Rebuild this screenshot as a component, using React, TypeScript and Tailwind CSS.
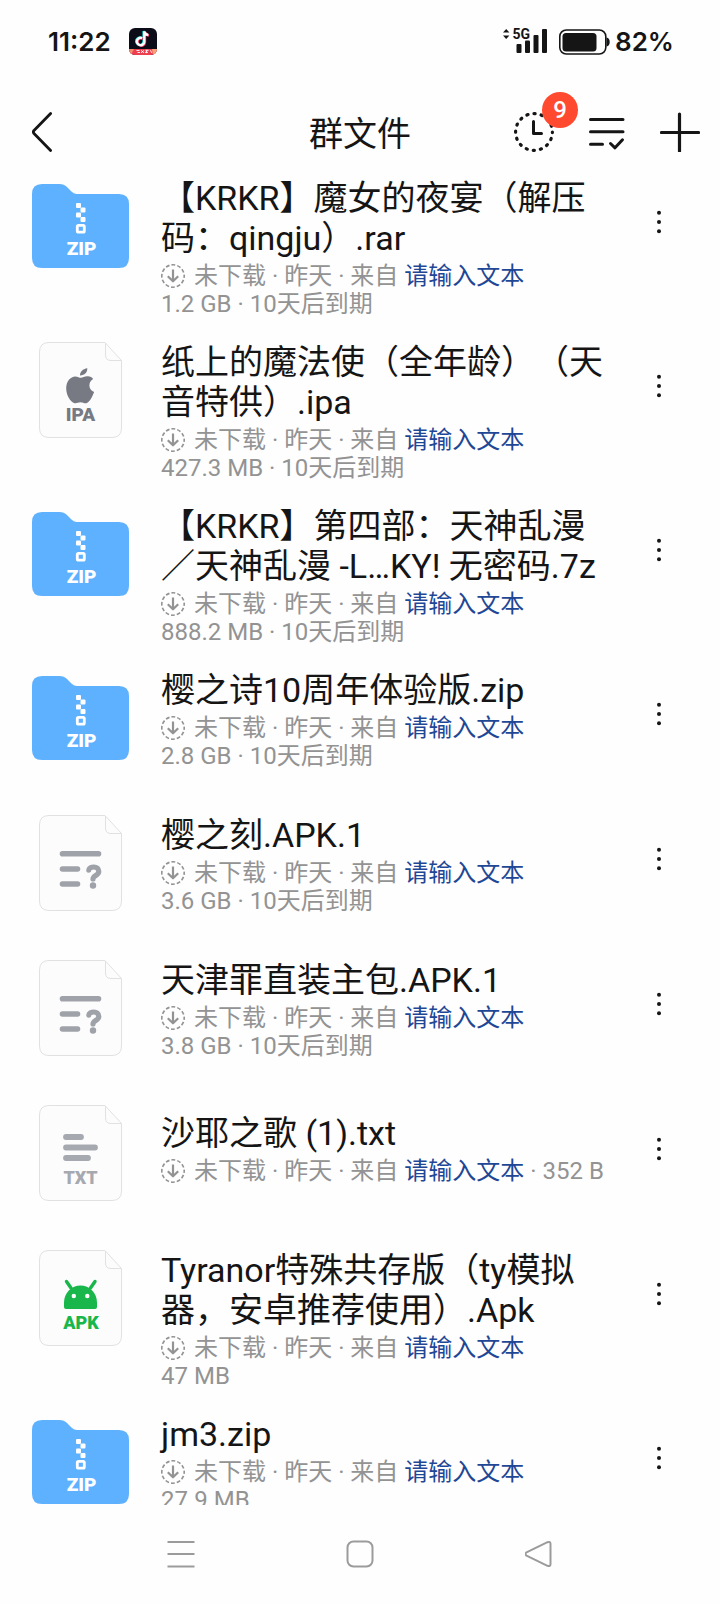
import type { ReactNode } from "react";

type FileKind = "zip" | "ipa" | "unknown" | "txt" | "apk";

interface GroupFile {
  name: string;
  kind: FileKind;
  sender: string;
  inlineSize?: string;
  detail?: string;
}

const SENDER = "请输入文本";

const files: GroupFile[] = [
  { name: "【KRKR】魔女的夜宴（解压码：qingju）.rar", kind: "zip", sender: SENDER, detail: "1.2 GB · 10天后到期" },
  { name: "纸上的魔法使（全年龄）（天音特供）.ipa", kind: "ipa", sender: SENDER, detail: "427.3 MB · 10天后到期" },
  { name: "【KRKR】第四部：天神乱漫／天神乱漫 -L…KY! 无密码.7z", kind: "zip", sender: SENDER, detail: "888.2 MB · 10天后到期" },
  { name: "樱之诗10周年体验版.zip", kind: "zip", sender: SENDER, detail: "2.8 GB · 10天后到期" },
  { name: "樱之刻.APK.1", kind: "unknown", sender: SENDER, detail: "3.6 GB · 10天后到期" },
  { name: "天津罪直装主包.APK.1", kind: "unknown", sender: SENDER, detail: "3.8 GB · 10天后到期" },
  { name: "沙耶之歌 (1).txt", kind: "txt", sender: SENDER, inlineSize: "352 B" },
  { name: "Tyranor特殊共存版（ty模拟器，安卓推荐使用）.Apk", kind: "apk", sender: SENDER, detail: "47 MB" },
  { name: "jm3.zip", kind: "zip", sender: SENDER, detail: "27.9 MB" },
];

// Status bar icons
const TikTokIcon = () => (
  <svg className="w-7 h-7" viewBox="0 0 28 28" aria-hidden="true">
    <defs>
      <clipPath id="app-clip">
        <rect width="28" height="27" rx="6" />
      </clipPath>
    </defs>
    <g clipPath="url(#app-clip)">
      <rect width="28" height="28" fill="#0b0c17" />
      <g fill="none" strokeWidth="2.4">
        <path d="M13.2 10.2a3.7 3.7 0 1 0 2.1 3.6V3.4c.4 2 1.6 3.2 4 3.6" stroke="#25e5e0" transform="translate(-.7 -.4)" />
        <path d="M13.2 10.2a3.7 3.7 0 1 0 2.1 3.6V3.4c.4 2 1.6 3.2 4 3.6" stroke="#f43360" transform="translate(.7 .5)" />
        <path d="M13.2 10.2a3.7 3.7 0 1 0 2.1 3.6V3.4c.4 2 1.6 3.2 4 3.6" stroke="#fff" />
      </g>
      <path d="M0 21h28v7H0z" fill="#ee3f50" />
      <path d="M0 21h5l-3 6H0z" fill="#f58a6c" />
      <path d="M23 21h5v6h-4z" fill="#f7a07a" />
      <path d="M7.500 22.500h3m-2 2h2.500m1-2.200l3 2.600m0-2.600l-3 2.600m4.500-2.600h3m-3.500 2h3m-1.500-2v2.800m4-2.800l1.200 2.500" stroke="#fff" strokeWidth=".9" fill="none" />
    </g>
  </svg>
);

const SignalIcon = () => (
  <svg className="w-11 h-7 overflow-visible" viewBox="0 0 44 28" fill="#151515" aria-hidden="true">
    <path d="M3.200 1L6.400 4.600H0zM3.200 11L6.400 7.400H0z" />
    <text x="9.500" y="11" fontSize="14" fontWeight="700" fontFamily="Roboto, sans-serif">5G</text>
    <rect x="13.500" y="16" width="5" height="9" rx="1" />
    <rect x="22" y="12.500" width="5" height="12.500" rx="1" />
    <rect x="30.500" y="7" width="5" height="18" rx="1" />
    <rect x="39" y="1" width="5" height="24" rx="1" />
  </svg>
);

const BatteryIcon = () => (
  <svg className="w-[51px] h-7" viewBox="0 0 51 28" aria-hidden="true">
    <rect x=".8" y="2" width="46" height="24" rx="6.500" fill="none" stroke="#151515" strokeWidth="1.600" />
    <rect x="3.500" y="5" width="34" height="18.500" rx="3.500" fill="#151515" />
    <path d="M47.500 9.500c2.200.4 3.200 1.800 3.200 4.500s-1 4.100-3.200 4.500z" fill="#151515" />
  </svg>
);

// Header icons
const BackIcon = () => (
  <svg className="w-5 h-10" fill="none" stroke="#151515" viewBox="0 0 20 40">
    <path strokeLinecap="round" strokeLinejoin="round" strokeWidth={2.8} d="M18.600 1.600L2 18.500q-1.300 1.500 0 3L18.600 38.400" />
  </svg>
);

const ClockIcon = () => (
  <svg className="w-10 h-10" fill="none" stroke="#151515" strokeLinecap="round" viewBox="0 0 40 40">
    <circle cx="20" cy="20" r="18.400" strokeWidth={3.2} strokeDasharray="1.200 6.026" strokeDashoffset=".6" />
    <path strokeWidth={3} strokeLinejoin="round" d="M19.500 9.500V21.500H27.500" />
  </svg>
);

const ListCheckIcon = () => (
  <svg className="w-9 h-10" fill="none" stroke="#151515" strokeLinecap="round" strokeLinejoin="round" strokeWidth={3} viewBox="0 0 36 40">
    <path d="M1.500 7.500H34M1.500 19.800H34M1.500 32.300H13.500M21.500 31.500L26 35.800L33.500 27.800" />
  </svg>
);

const PlusIcon = () => (
  <svg className="w-10 h-10" fill="none" stroke="#151515" strokeLinecap="round" strokeWidth={3.2} viewBox="0 0 40 40">
    <path d="M19.500 2v37M1.500 20.500H38.500" />
  </svg>
);

const DownloadIcon = () => (
  <svg className="w-6 h-6 shrink-0" fill="none" stroke="#939393" viewBox="0 0 24 24" aria-hidden="true">
    <circle cx="12" cy="12" r="11.200" strokeWidth={1.6} strokeDasharray="3.800 2.065" strokeDashoffset="1.900" />
    <path strokeLinejoin="round" strokeWidth={2.2} d="M12 5.500V17M6.800 12.200L12 17.300L17.200 12.200" />
  </svg>
);

const MoreIcon = () => (
  <svg className="w-1 h-6" fill="#151515" viewBox="0 0 4 24">
    <circle cx="2" cy="2.700" r="2" />
    <circle cx="2" cy="12" r="2" />
    <circle cx="2" cy="21.300" r="2" />
  </svg>
);

// File type icons
const ZipIcon = () => (
  <svg className="w-[97px] h-[84px]" viewBox="0 0 97 84" aria-hidden="true">
    <path d="M0 10Q0 0 10 0H27.500Q32 0 35 3L40 8Q42.300 10 45 10H87Q97 10 97 20V74Q97 84 87 84H10Q0 84 0 74Z" fill="#5eb1ff" />
    <g fill="#fff">
      <rect x="44" y="19" width="5" height="5" rx="1" />
      <rect x="48.500" y="23.500" width="5" height="5" rx="1" />
      <rect x="44" y="28.500" width="5" height="5" rx="1" />
      <rect x="48.500" y="33" width="5" height="5" rx="1" />
    </g>
    <rect x="45.300" y="41.300" width="7" height="6.800" rx="1.200" fill="none" stroke="#fff" strokeWidth="2.800" />
    <text x="49.500" y="70.500" textAnchor="middle" fontSize="19" fontWeight="900" fontFamily="Roboto, sans-serif" fill="#fff">ZIP</text>
  </svg>
);

const Sheet = ({ children }: { children: ReactNode }) => (
  <svg className="w-[83px] h-24" viewBox="0 0 83 96" aria-hidden="true">
    <path d="M10 .5H66L82.500 18.500V86Q82.500 95.500 73 95.500H10Q.5 95.500 .5 86V10Q.5 .5 10 .5Z" fill="#fcfcfd" stroke="#dfe1e3" />
    <path d="M66.500 1V13Q66.500 18.500 72 18.500H82.500" fill="none" stroke="#dfe1e3" />
    {children}
  </svg>
);

const IpaIcon = () => (
  <Sheet>
    <g fill="#777a82">
      <path d="M42 35.800c1.900 0 3.400-1.700 7-1.500 2.200.1 4 1.100 5.100 2.600-4.700 2.700-5.400 10.400 1 13-1.400 4.100-4.300 10-7.600 11.300-2 .6-3.500-.9-6-.9s-3.900 1.400-5.900.9C31.100 60.100 27.300 53.200 27.200 46.600c0-7.600 4.300-12.100 9.100-12.200 2.500 0 4 1.400 5.700 1.400z" />
      <path d="M41 33.500c0-3.700 2.700-6.500 7.300-7.200.3 4-2.600 7-7.300 7.200z" />
    </g>
    <text x="41.500" y="79" textAnchor="middle" fontSize="19" fontWeight="900" fontFamily="Roboto, sans-serif" fill="#777a82">IPA</text>
  </Sheet>
);

const UnknownIcon = () => (
  <Sheet>
    <g fill="none" stroke="#9fa2a8" strokeLinecap="round" strokeWidth="5.600">
      <path d="M23.500 38.800H59.500M23.500 54H38.500M23.500 69H38.500" />
      <path d="M49.800 55.200C50 51.200 59.800 50.200 59.800 56.500C59.800 60.500 54 60.500 54 64" strokeWidth="5.200" />
    </g>
    <circle cx="54" cy="70.500" r="3.200" fill="#9fa2a8" />
  </Sheet>
);

const TxtIcon = () => (
  <Sheet>
    <path d="M27 32H42M27 42.500H56M27 53H49" stroke="#a6a9b0" strokeLinecap="round" strokeWidth="5.800" />
    <text x="41.500" y="78.500" textAnchor="middle" fontSize="18" fontWeight="900" fontFamily="Roboto, sans-serif" fill="#a6a9b0">TXT</text>
  </Sheet>
);

const ApkIcon = () => (
  <Sheet>
    <path d="M27.500 31.500L32 38M56 31.500L51.500 38" stroke="#19b74b" strokeLinecap="round" strokeWidth="3.400" />
    <path d="M25 57V52.500A16.500 17 0 0 1 58 52.500V57Q58 59 56 59H27Q25 59 25 57Z" fill="#19b74b" />
    <circle cx="34.800" cy="46" r="2.200" fill="#fff" />
    <circle cx="48.300" cy="46" r="2.200" fill="#fff" />
    <text x="42" y="79" textAnchor="middle" fontSize="18" fontWeight="900" fontFamily="Roboto, sans-serif" fill="#19b74b">APK</text>
  </Sheet>
);

const fileIcons: Record<FileKind, () => ReactNode> = {
  zip: ZipIcon,
  ipa: IpaIcon,
  unknown: UnknownIcon,
  txt: TxtIcon,
  apk: ApkIcon,
};

function StatusBar() {
  return (
    <div className="flex h-[82px] shrink-0 items-center justify-between pt-0.5 pl-12 pr-[46px] font-['Inter',sans-serif] text-[26px] leading-8 font-semibold">
      <div className="flex items-center gap-[18px]">
        <span>11:22</span>
        <TikTokIcon />
      </div>
      <div className="flex items-center gap-3">
        <SignalIcon />
        <div className="flex items-center gap-[5px]">
          <BatteryIcon />
          <span>82%</span>
        </div>
      </div>
    </div>
  );
}

function Header() {
  return (
    <header className="flex h-24 shrink-0 items-center px-5 pt-1">
      <div className="flex flex-1">
        <button type="button" aria-label="返回" className="ml-3 flex">
          <BackIcon />
        </button>
      </div>
      <h1 className="pt-1 text-[34px] leading-10">群文件</h1>
      <div className="flex flex-1 items-center justify-end gap-[35px]">
        <button type="button" aria-label="传输记录" className="relative flex">
          <ClockIcon />
          <span className="absolute -top-5 -right-6 flex h-9 w-9 items-center justify-center rounded-full bg-[#ff4a2f] text-2xl font-medium text-white">
            9
          </span>
        </button>
        <button type="button" aria-label="多选" className="flex">
          <ListCheckIcon />
        </button>
        <button type="button" aria-label="添加" className="flex">
          <PlusIcon />
        </button>
      </div>
    </header>
  );
}

function FileRow({ file }: { file: GroupFile }) {
  const Icon = fileIcons[file.kind];

  return (
    <li className="flex min-h-[145px] items-start px-8 pb-6">
      <div className="flex h-24 w-[97px] shrink-0 items-center justify-center">
        <Icon />
      </div>
      <div className="ml-8 mr-4 flex min-h-[88px] min-w-0 flex-1 flex-col justify-center">
        <h2 className="text-[34px] leading-10">{file.name}</h2>
        <div className="mt-1 text-2xl leading-7 text-[#939393]">
          <p className="flex items-center gap-[9px] whitespace-nowrap">
            <DownloadIcon />
            <span>
              未下载 · 昨天 · 来自{" "}
              <a href="#" className="text-[#1f4795]">{file.sender}</a>
              {file.inlineSize && ` · ${file.inlineSize}`}
            </span>
          </p>
          {file.detail && <p>{file.detail}</p>}
        </div>
      </div>
      <button type="button" aria-label="更多" className="flex h-[88px] w-[58px] shrink-0 items-center justify-center">
        <MoreIcon />
      </button>
    </li>
  );
}

function SystemNav() {
  return (
    <nav className="grid h-[99px] shrink-0 grid-cols-3 items-center justify-items-center px-[92px] pb-0.5">
      <button type="button" aria-label="菜单">
        <svg className="w-7 h-7" fill="none" stroke="#9b9b9b" strokeWidth={2} viewBox="0 0 28 28">
          <path d="M.5 2H27.500M.5 14H27.500M.5 26.500H27.500" />
        </svg>
      </button>
      <button type="button" aria-label="主屏幕">
        <svg className="w-7 h-7" fill="none" stroke="#9b9b9b" strokeWidth={2} viewBox="0 0 28 28">
          <rect x="1.500" y="1.500" width="25" height="25" rx="6" />
        </svg>
      </button>
      <button type="button" aria-label="后退">
        <svg className="w-7 h-7" fill="none" stroke="#9b9b9b" strokeWidth={2} strokeLinejoin="round" viewBox="0 0 28 28">
          <path d="M1.500 12.400L22.500 2.200Q25.500 1.200 25.500 4V24Q25.500 26.800 22.500 25.800L1.500 15.600Q-.8 14 1.500 12.400Z" />
        </svg>
      </button>
    </nav>
  );
}

export default function App() {
  return (
    <div className="flex h-screen flex-col bg-[#fefefe] font-['Roboto','Noto_Sans_CJK_SC',sans-serif] font-normal text-[#151515] [text-spacing-trim:space-all]">
      <StatusBar />
      <Header />
      <main className="min-h-0 flex-1 overflow-y-auto [scrollbar-width:none]">
        <ul>
          {files.map((file) => (
            <FileRow key={file.name} file={file} />
          ))}
        </ul>
      </main>
      <SystemNav />
    </div>
  );
}
